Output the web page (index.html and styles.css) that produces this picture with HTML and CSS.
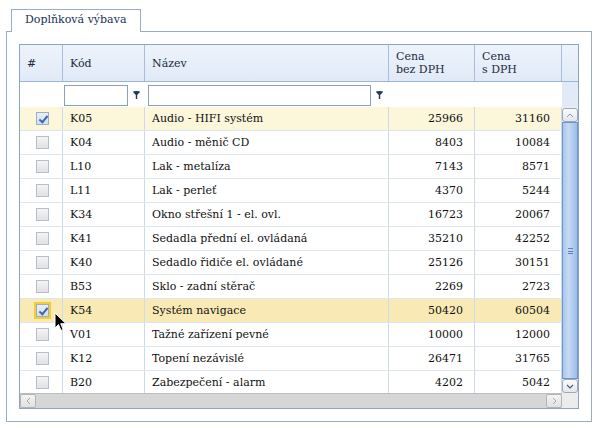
FILE: index.html
```html
<!DOCTYPE html>
<html lang="cs">
<head>
<meta charset="utf-8">
<link rel="stylesheet" href="styles.css">
</head>
<body>
<div class="page">
  <div class="tabs"><div class="tab">Doplňková výbava</div></div>
  <div class="panel">
    <div class="grid">
      <div class="head">
        <div class="hc c1">#</div>
        <div class="hc c2">Kód</div>
        <div class="hc c3">Název</div>
        <div class="hc c4">Cena<br>bez DPH</div>
        <div class="hc c5">Cena<br>s DPH</div>
        <div class="hc cs"></div>
      </div>
      <div class="filter">
        <div class="fc c1"></div>
        <div class="fc c2f"><span class="inp w1"></span><svg class="funnel" width="7" height="8" viewBox="0 0 7 8"><path d="M0 1a3.5 1 0 0 1 7 0L4.2 4v4H2.8V4z" fill="#22395c"/></svg></div>
        <div class="fc c3f"><span class="inp w2"></span><svg class="funnel" width="7" height="8" viewBox="0 0 7 8"><path d="M0 1a3.5 1 0 0 1 7 0L4.2 4v4H2.8V4z" fill="#22395c"/></svg></div>
        <div class="fc rest"></div>
        <div class="fc cs"></div>
      </div>
      <div class="body">
        <div class="rows">
          <div class="row sel"><div class="c1"><span class="cb on"></span></div><div class="c2">K05</div><div class="c3">Audio - HIFI systém</div><div class="c4 num">25966</div><div class="c5 num">31160</div></div>
          <div class="row"><div class="c1"><span class="cb"></span></div><div class="c2">K04</div><div class="c3">Audio - měnič CD</div><div class="c4 num">8403</div><div class="c5 num">10084</div></div>
          <div class="row"><div class="c1"><span class="cb"></span></div><div class="c2">L10</div><div class="c3">Lak - metalíza</div><div class="c4 num">7143</div><div class="c5 num">8571</div></div>
          <div class="row"><div class="c1"><span class="cb"></span></div><div class="c2">L11</div><div class="c3">Lak - perleť</div><div class="c4 num">4370</div><div class="c5 num">5244</div></div>
          <div class="row"><div class="c1"><span class="cb"></span></div><div class="c2">K34</div><div class="c3">Okno střešní 1 - el. ovl.</div><div class="c4 num">16723</div><div class="c5 num">20067</div></div>
          <div class="row"><div class="c1"><span class="cb"></span></div><div class="c2">K41</div><div class="c3">Sedadla přední el. ovládaná</div><div class="c4 num">35210</div><div class="c5 num">42252</div></div>
          <div class="row"><div class="c1"><span class="cb"></span></div><div class="c2">K40</div><div class="c3">Sedadlo řidiče el. ovládané</div><div class="c4 num">25126</div><div class="c5 num">30151</div></div>
          <div class="row"><div class="c1"><span class="cb"></span></div><div class="c2">B53</div><div class="c3">Sklo - zadní stěrač</div><div class="c4 num">2269</div><div class="c5 num">2723</div></div>
          <div class="row over"><div class="c1"><span class="cb on focus"></span></div><div class="c2">K54</div><div class="c3">Systém navigace</div><div class="c4 num">50420</div><div class="c5 num">60504</div></div>
          <div class="row"><div class="c1"><span class="cb"></span></div><div class="c2">V01</div><div class="c3">Tažné zařízení pevné</div><div class="c4 num">10000</div><div class="c5 num">12000</div></div>
          <div class="row"><div class="c1"><span class="cb"></span></div><div class="c2">K12</div><div class="c3">Topení nezávislé</div><div class="c4 num">26471</div><div class="c5 num">31765</div></div>
          <div class="row"><div class="c1"><span class="cb"></span></div><div class="c2">B20</div><div class="c3">Zabezpečení - alarm</div><div class="c4 num">4202</div><div class="c5 num">5042</div></div>
        </div>
        <div class="vscroll">
          <div class="sbtn up"><svg width="8" height="5" viewBox="0 0 8 5"><path d="M1 4L4 1l3 3" fill="none" stroke="#8a9ab0" stroke-width="1"/></svg></div>
          <div class="thumb"><span class="grip"></span></div>
          <div class="sbtn down"><svg width="8" height="5" viewBox="0 0 8 5"><path d="M1 1l3 3 3-3" fill="none" stroke="#4a5d79" stroke-width="1.2"/></svg></div>
        </div>
      </div>
      <div class="hscroll">
        <div class="track">
          <div class="hbtn left"><svg width="5" height="8" viewBox="0 0 5 8"><path d="M4 1L1 4l3 3" fill="none" stroke="#a0a8b4"/></svg></div>
          <div class="hbar"></div>
          <div class="hbtn right"><svg width="5" height="8" viewBox="0 0 5 8"><path d="M1 1l3 3-3 3" fill="none" stroke="#a0a8b4"/></svg></div>
        </div>
        <div class="corner"></div>
      </div>
    </div>
  </div>
</div>
<svg class="cursor" width="13" height="20" viewBox="0 0 13 20"><path d="M1 1v15l3.5-3.5 2.5 6 2.2-1-2.5-5.8H12z" fill="#000" stroke="#fff" stroke-width="1"/></svg>
</body>
</html>
```
FILE: styles.css
```css
* { box-sizing: border-box; }
html, body { margin: 0; padding: 0; background: #fff; }
body {
  font-family: "DejaVu Serif", serif;
  font-size: 11px;
  color: #111;
  position: relative;
  width: 598px;
  height: 428px;
  overflow: hidden;
}
.page { padding: 9px 6px 0 6px; }
.tabs { padding-left: 5px; height: 22px; position: relative; z-index: 1; }
.tab {
  width: 130px;
  height: 23px;
  border: 1px solid #99adc9;
  border-bottom: none;
  background: #fff;
  color: #15325a;
  font-size: 11px;
  line-height: 20px;
  padding-left: 13px;
}
.panel {
  width: 586px;
  height: 391px;
  border: 1px solid #99adc9;
  padding: 12px 0 0 12px;
}
.grid {
  width: 560px;
  height: 365px;
  border: 1px solid #8ea4c4;
  display: flex;
  flex-direction: column;
  overflow: hidden;
}
.c1 { width: 43px; }
.c2 { width: 82px; }
.c3 { width: 244px; }
.c4 { width: 86px; }
.c5 { width: 87px; }
.cs { width: 16px; }
.head {
  display: flex;
  height: 37px;
  border-bottom: 1px solid #9fb4d2;
  background: linear-gradient(#edf3fb, #e0eaf7);
}
.hc {
  border-right: 1px solid #a9bdd9;
  padding: 0 7px;
  display: flex;
  align-items: center;
  line-height: 13px;
  color: #1e2a3a;
}
.hc.cs { border-right: none; }
.filter {
  display: flex;
  height: 25px;
  background: #fff;
}
.fc { height: 25px; display: flex; align-items: center; }
.c2f { width: 82px; padding-left: 1px; }
.c3f { width: 244px; padding-left: 3px; }
.rest { width: 173px; }
.filter .cs { background: #e1eaf6; }
.inp {
  display: block;
  height: 21px;
  border: 1px solid #8aa0c0;
  background: #fff;
  margin-top: 2px;
}
.w1 { width: 64px; }
.w2 { width: 223px; }
.funnel { margin-left: 5px; margin-top: 1px; }
.body { display: flex; height: 286px; overflow: hidden; }
.rows { width: 542px; }
.row {
  display: flex;
  height: 24px;
  border-bottom: 1px solid #dde5f0;
  line-height: 23px;
}
.row > div {
  border-right: 1px solid #cbdaee;
  padding: 0 7px;
  white-space: nowrap;
  overflow: hidden;
}
.row > .c1 { display: flex; align-items: center; justify-content: center; padding: 0 0 0 2px; }
.row .num { text-align: right; padding-right: 11px; }
.row.sel { background: #fcf6db; }
.row.over { background: #f9eab5; }
.cb {
  display: block;
  width: 13px;
  height: 13px;
  border: 1px solid #b4c0d0;
  background: linear-gradient(#f4f4f4, #e2e2e2);
  position: relative;
}
.cb.on::after {
  content: "";
  position: absolute;
  left: 4px;
  top: 1px;
  width: 3px;
  height: 7px;
  border-right: 2px solid #3c68b0;
  border-bottom: 2px solid #3c68b0;
  transform: rotate(40deg);
}
.cb.on { background: linear-gradient(#e9eef7, #d4deec); border-color: #9daecb; }
.cb.focus { outline: 2px solid #f2cf2e; outline-offset: 0; }
.vscroll {
  width: 16px;
  display: flex;
  flex-direction: column;
  background: #eee;
}
.sbtn {
  height: 14px;
  border: 1px solid #9aa8bd;
  border-radius: 3px;
  background: linear-gradient(#fafafa, #e3e6ea);
  display: flex;
  align-items: center;
  justify-content: center;
}
.up { margin-top: 1px; }
.thumb {
  flex: 1;
  border: 1px solid #6f95c8;
  background: linear-gradient(90deg, #a9c6ec, #c6daf4 40%, #9dbde8);
  display: flex;
  align-items: center;
  justify-content: center;
}
.grip {
  width: 5px;
  height: 6px;
  border-top: 1px solid #5c82b8;
  border-bottom: 1px solid #5c82b8;
  position: relative;
}
.grip::after {
  content: "";
  position: absolute;
  left: 0; right: 0; top: 2px;
  border-top: 1px solid #5c82b8;
}
.hscroll { display: flex; height: 15px; }
.track {
  width: 542px;
  display: flex;
  background: #d6d6d6;
  border-top: 1px solid #bdbdbd;
}
.hbtn {
  width: 16px;
  height: 14px;
  border: 1px solid #b4b4b4;
  border-radius: 2px;
  background: linear-gradient(#f4f4f4, #e0e0e0);
  display: flex;
  align-items: center;
  justify-content: center;
}
.hbar { flex: 1; }
.corner { width: 16px; background: #ececec; }
.cursor { position: absolute; left: 54px; top: 312px; }
```
